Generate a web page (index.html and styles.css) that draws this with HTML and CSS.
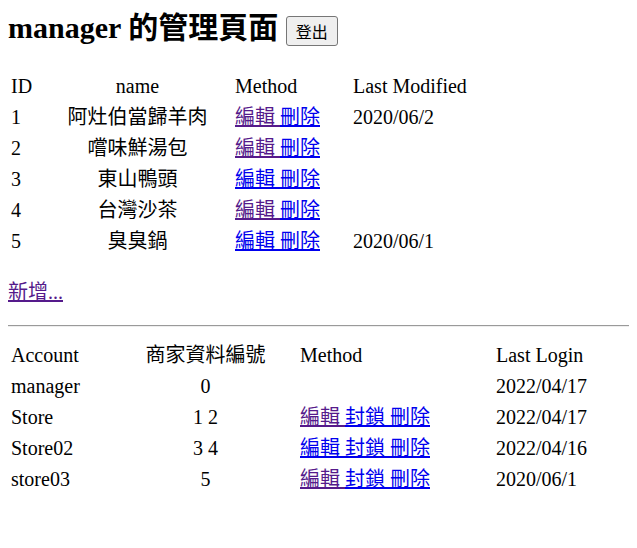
FILE: index.html
```html
<!DOCTYPE html>
<html lang="zh-Hant">
<head>
<meta charset="utf-8">
<title>manager 的管理頁面</title>
<link rel="stylesheet" href="styles.css">
</head>
<body>
<h2 class="title">manager 的管理頁面 <button class="logout">登出</button></h2>

<table class="list">
  <tr><td class="c-id">ID</td><td class="c-name">name</td><td class="c-method">Method</td><td>Last Modified</td></tr>
  <tr><td class="c-id">1</td><td class="c-name">阿灶伯當歸羊肉</td><td class="c-method"><a href="#" class="v">編輯 </a><a href="#">刪除</a></td><td>2020/06/2</td></tr>
  <tr><td class="c-id">2</td><td class="c-name">嚐味鮮湯包</td><td class="c-method"><a href="#" class="v">編輯 </a><a href="#">刪除</a></td><td></td></tr>
  <tr><td class="c-id">3</td><td class="c-name">東山鴨頭</td><td class="c-method"><a href="#">編輯 </a><a href="#">刪除</a></td><td></td></tr>
  <tr><td class="c-id">4</td><td class="c-name">台灣沙茶</td><td class="c-method"><a href="#" class="v">編輯 </a><a href="#">刪除</a></td><td></td></tr>
  <tr><td class="c-id">5</td><td class="c-name">臭臭鍋</td><td class="c-method"><a href="#">編輯 </a><a href="#">刪除</a></td><td>2020/06/1</td></tr>
</table>

<p class="add"><a href="#" class="v">新增...</a></p>

<div class="rule"></div>

<table class="list">
  <tr><td class="a-acc">Account</td><td class="a-no">商家資料編號</td><td class="a-method">Method</td><td>Last Login</td></tr>
  <tr><td class="a-acc">manager</td><td class="a-no">0</td><td class="a-method"></td><td>2022/04/17</td></tr>
  <tr><td class="a-acc">Store</td><td class="a-no">1 2</td><td class="a-method"><a href="#" class="v">編輯 </a><a href="#">封鎖 </a><a href="#">刪除</a></td><td>2022/04/17</td></tr>
  <tr><td class="a-acc">Store02</td><td class="a-no">3 4</td><td class="a-method"><a href="#">編輯 </a><a href="#">封鎖 </a><a href="#">刪除</a></td><td>2022/04/16</td></tr>
  <tr><td class="a-acc">store03</td><td class="a-no">5</td><td class="a-method"><a href="#" class="v">編輯 </a><a href="#">封鎖 </a><a href="#">刪除</a></td><td>2020/06/1</td></tr>
</table>
</body>
</html>
```

FILE: styles.css
```css
html {
  overflow: hidden;
  scrollbar-width: none;
}

body {
  margin: 8px;
  font-family: "Liberation Serif", "Noto Sans CJK TC", serif;
  font-size: 20px;
  color: #000;
  background: #fff;
}

.title {
  font-size: 30px;
  font-weight: bold;
  margin: 0 0 22px;
  line-height: 40px;
}

.logout {
  font-family: "Noto Sans CJK TC", sans-serif;
  font-size: 16px;
  line-height: 22px;
  padding: 3px 9px;
  background: #efefef;
  color: #000;
  border: 1px solid #767676;
  border-radius: 3px;
  vertical-align: 0;
}

.list {
  border-collapse: separate;
  border-spacing: 2px;
}

.list td {
  padding: 1px 2px 1px 1px;
  line-height: 27px;
  text-align: left;
  vertical-align: middle;
  white-space: nowrap;
}

.list td.c-id { width: 29px; }
.list td.c-name { width: 185px; text-align: center; }
.list td.c-method { width: 113px; }

.list td.a-acc { width: 100px; }
.list td.a-no { width: 179px; text-align: center; }
.list td.a-method { width: 191px; }

a { color: #0000ee; text-decoration: underline; }
a.v { color: #551a8b; }

.add {
  margin: 20px 0 18px;
  line-height: 29px;
}

.rule {
  box-sizing: border-box;
  width: calc(100vw - 8px);
  height: 2px;
  margin: 10px 0 12px;
  border-top: 1px solid #9a9a9a;
  border-bottom: 1px solid #eeeeee;
}
```
